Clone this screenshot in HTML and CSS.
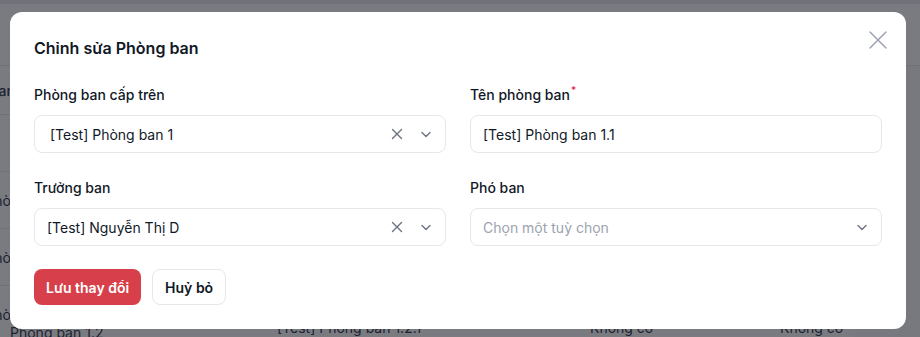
FILE: index.html
```html
<!DOCTYPE html>
<html lang="vi">
<head>
    <meta charset="UTF-8">
    <meta name="viewport" content="width=device-width, initial-scale=1.0">
    <title>Chỉnh sửa Phòng ban</title>
    <link rel="stylesheet" href="styles.css">
</head>
<body>
    <!-- Page behind the dialog -->
    <div class="page">
        <div class="topbar"></div>
        <div class="toolbar"></div>
        <table class="list">
            <tr class="list-head">
                <th><span class="indent">Phòng ban</span></th><th>Phòng ban cấp trên</th><th>Trưởng ban</th><th>Phó ban</th>
            </tr>
            <tr><td>[Test] Phòng ban 1</td><td>Không có</td><td>Không có</td><td>Không có</td></tr>
            <tr><td><span class="indent">[Test] Phòng ban 1.1</span></td><td>[Test] Phòng ban 1</td><td>Không có</td><td>Không có</td></tr>
            <tr><td><span class="indent">[Test] Phòng ban 1.1.1</span></td><td>[Test] Phòng ban 1.1</td><td>Không có</td><td>Không có</td></tr>
            <tr class="row-tall">
                <td><span class="indent">[Test] Phòng ban 1.1.2</span><span class="indent-deep">Phòng ban 1.2</span></td>
                <td>[Test] Phòng ban 1.2.1</td><td>Không có</td><td>Không có</td>
            </tr>
        </table>
    </div>

    <!-- Edit dialog -->
    <div class="overlay">
        <div class="modal">
            <button class="modal-close" aria-label="Đóng">
                <svg width="24" height="24" viewBox="0 0 24 24" fill="none" stroke="currentColor" stroke-width="1.5" stroke-linecap="round">
                    <path d="M4 4L20 20M20 4L4 20"/>
                </svg>
            </button>
            <h2 class="modal-title">Chỉnh sửa Phòng ban</h2>

            <div class="form-grid">
                <div class="field">
                    <label>Phòng ban cấp trên</label>
                    <div class="select select--wide">
                        <span class="select-value">[Test] Phòng ban 1</span>
                        <svg class="icon-clear" width="12" height="12" viewBox="0 0 12 12" fill="none" stroke="currentColor" stroke-width="1.4" stroke-linecap="round"><path d="M1.5 1.5L10.5 10.5M10.5 1.5L1.5 10.5"/></svg>
                        <svg class="icon-chevron" width="12" height="12" viewBox="0 0 12 12" fill="none" stroke="currentColor" stroke-width="1.4" stroke-linecap="round" stroke-linejoin="round"><path d="M2 4.5L6 8.5L10 4.5"/></svg>
                    </div>
                </div>
                <div class="field">
                    <label>Tên phòng ban<sup class="req">*</sup></label>
                    <input class="input" type="text" value="[Test] Phòng ban 1.1">
                </div>
                <div class="field">
                    <label>Trưởng ban</label>
                    <div class="select">
                        <span class="select-value">[Test] Nguyễn Thị D</span>
                        <svg class="icon-clear" width="12" height="12" viewBox="0 0 12 12" fill="none" stroke="currentColor" stroke-width="1.4" stroke-linecap="round"><path d="M1.5 1.5L10.5 10.5M10.5 1.5L1.5 10.5"/></svg>
                        <svg class="icon-chevron" width="12" height="12" viewBox="0 0 12 12" fill="none" stroke="currentColor" stroke-width="1.4" stroke-linecap="round" stroke-linejoin="round"><path d="M2 4.5L6 8.5L10 4.5"/></svg>
                    </div>
                </div>
                <div class="field">
                    <label>Phó ban</label>
                    <div class="select">
                        <span class="select-value placeholder">Chọn một tuỳ chọn</span>
                        <svg class="icon-chevron" width="12" height="12" viewBox="0 0 12 12" fill="none" stroke="currentColor" stroke-width="1.4" stroke-linecap="round" stroke-linejoin="round"><path d="M2 4.5L6 8.5L10 4.5"/></svg>
                    </div>
                </div>
            </div>

            <div class="actions">
                <button class="btn btn-danger">Lưu thay đổi</button>
                <button class="btn btn-light">Huỷ bỏ</button>
            </div>
        </div>
    </div>
</body>
</html>
```

FILE: styles.css
```css
/* General Styles */
body {
    margin: 0;
    font-family: 'Inter', 'Noto Sans', sans-serif;
    background: #f9fafb;
    color: #111827;
    overflow: hidden;
}

/* Background page */
.page {
    height: 337px;
    overflow: hidden;
}

.topbar {
    height: 4px;
    background: #ececef;
}

.toolbar {
    height: 61px;
    background: #ffffff;
    border-bottom: 1px solid #e5e7eb;
}

.list {
    border-collapse: collapse;
    margin-left: -140px;
    font-size: 14px;
    color: #374151;
    background: #ffffff;
}

.list th,
.list td {
    text-align: left;
    padding: 0 12px;
    border-bottom: 1px solid #e5e7eb;
    white-space: nowrap;
}

.list th {
    height: 48px;
    font-weight: 500;
}

.list td {
    height: 56px;
}

.list th:nth-child(1), .list td:nth-child(1) { width: 381px; }
.list th:nth-child(2), .list td:nth-child(2) { width: 289px; }
.list th:nth-child(3), .list td:nth-child(3) { width: 166px; }

.indent {
    display: block;
    padding-left: 71px;
}

.indent-deep {
    display: block;
    padding-left: 138px;
}

.row-tall td {
    vertical-align: top;
    line-height: 18px;
    padding-top: 33px;
}

.row-tall td:first-child {
    padding-top: 20px;
}

/* Dialog */
.overlay {
    position: fixed;
    inset: 0;
    background: rgba(10, 12, 20, 0.54);
    padding: 12px 0 0 10px;
}

.modal {
    position: relative;
    width: 896px;
    box-sizing: border-box;
    background: #ffffff;
    border-radius: 12px;
    padding: 24px;
}

.modal-close {
    position: absolute;
    top: 16px;
    right: 16px;
    width: 24px;
    height: 24px;
    padding: 0;
    border: none;
    background: none;
    color: #9ca3af;
    cursor: pointer;
}

.modal-close svg {
    display: block;
}

.modal-title {
    margin: 0 0 25px;
    font-size: 16px;
    line-height: 24px;
    font-weight: 600;
}

.form-grid {
    display: grid;
    grid-template-columns: 1fr 1fr;
    column-gap: 24px;
    row-gap: 25px;
}

.field {
    display: flex;
    flex-direction: column;
    gap: 10px;
}

.field label {
    font-size: 14px;
    line-height: 20px;
    font-weight: 500;
}

.req {
    color: #e11d48;
    font-size: 10px;
    line-height: 0;
    margin-left: 1px;
}

.input,
.select {
    height: 38px;
    box-sizing: border-box;
    border: 1px solid #e5e7eb;
    border-radius: 8px;
    background: #ffffff;
    font-family: inherit;
    font-size: 14px;
    color: #111827;
}

.input {
    padding: 0 12px;
    outline: none;
}

.select {
    display: flex;
    align-items: center;
    padding: 0 13px 0 12px;
}

.select--wide {
    padding-left: 15px;
}

.select-value {
    flex: 1;
}

.placeholder {
    color: #9ca3af;
}

.icon-clear {
    color: #6b7280;
    margin-right: 17px;
}

.icon-chevron {
    color: #6b7280;
}

.actions {
    display: flex;
    gap: 11px;
    margin-top: 23px;
}

.btn {
    height: 36px;
    padding: 0 12px;
    border-radius: 8px;
    font-family: inherit;
    font-size: 14px;
    font-weight: 600;
    cursor: pointer;
}

.btn-danger {
    background: #d7404a;
    border: none;
    color: #ffffff;
}

.btn-light {
    background: #ffffff;
    border: 1px solid #e5e7eb;
    color: #111827;
}
```
